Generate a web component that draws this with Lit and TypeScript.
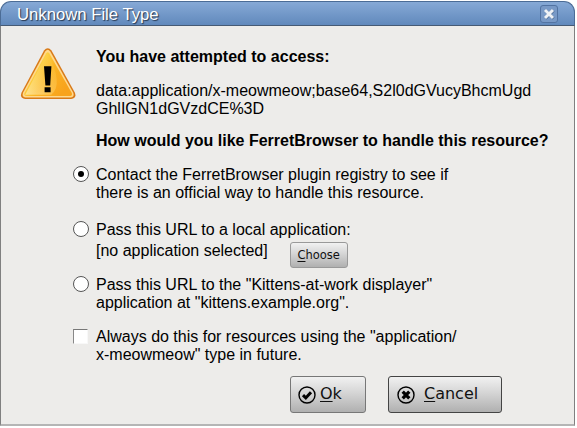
import { LitElement, html, css, svg } from "lit";
import { customElement } from "lit/decorators.js";

@customElement("warning-icon")
class WarningIcon extends LitElement {
  static styles = css`:host { display: block; width: 58px; height: 54px; } svg { display: block; }`;
  render() {
    return html`<svg width="58" height="54" viewBox="0.8 0 58 54">
      <defs>
        <linearGradient id="fill" x1="0" y1="0" x2="1" y2="0.6">
          <stop offset="0" stop-color="#fff09a"></stop>
          <stop offset="0.3" stop-color="#fdd74a"></stop>
          <stop offset="0.6" stop-color="#fbb424"></stop>
          <stop offset="1" stop-color="#f8a31c"></stop>
        </linearGradient>
        <linearGradient id="glow" x1="0" y1="1" x2="0.8" y2="0">
          <stop offset="0" stop-color="#fffbd8"></stop>
          <stop offset="1" stop-color="#fdd455" stop-opacity="0.2"></stop>
        </linearGradient>
      </defs>
      <path d="M24.8 2.6Q28.5 -2 32.3 2.6L55.6 44.4Q57.8 50.2 52 51H6Q0.2 50.2 2.4 44.4Z" fill="#d97a18"></path>
      <path d="M26 3.5Q28.5 0.2 31.1 3.5L54.1 44.8Q55.5 49 51.8 49.4H6.2Q2.4 49 3.8 44.8Z" fill="#ffd98c"></path>
      <path d="M27 5.2Q28.5 3.2 30 5.2L52.6 45Q53.4 47.5 51 48H7Q4.4 47.5 5.3 45Z" fill="url(#fill)"></path>
      <path d="M28 5L6 46.8H32Q45 36 28 5Z" fill="url(#glow)" opacity="0.55"></path>
      <path d="M24.8 18.2H32.2L31 37.6H26.2ZM25.4 39.2H31.4V44.2H25.4Z" fill="#000"></path>
    </svg>`;
  }
}

const check = svg`<path d="M5 9.2L7.8 11.9L13 6.2" fill="none" stroke="#000" stroke-width="3"></path>`;
const cross = svg`<path d="M5.7 5.7L12.3 12.3M12.3 5.7L5.7 12.3" fill="none" stroke="#000" stroke-width="3.3"></path>`;
const ring = (mark: unknown) => html`<svg class="ring" width="18" height="18" viewBox="0 0 18 18">
  <circle cx="9" cy="9" r="8" fill="none" stroke="#000" stroke-width="1.4"></circle>${mark}</svg>`;

@customElement("app-root")
class AppRoot extends LitElement {
  static styles = css`
    :host { display: block; width: 577px; height: 428px; background: #fff; overflow: hidden;
      font: 16px/18px "Liberation Sans", Arial, sans-serif; color: #000; }
    * { box-sizing: border-box; }
    .window { width: 575px; height: 426px; padding-top: 1px; display: flex; flex-direction: column; }
    .title { height: 25px; flex: none; display: flex; align-items: center; justify-content: space-between;
      padding: 1px 16px 0 16px; border: 1px solid #4b6c96; border-bottom-color: #465a74; border-radius: 11px 11px 0 0;
      background: linear-gradient(#86a9d6, #6189bc); color: #fff; font-size: 16.7px; text-shadow: 1px 1px 1px #24354c; }
    .name { padding-top: 2px; }
    .close { width: 18px; height: 18px; display: block; }
    .body { flex: 1; background: #edecea; border: 1px solid #808080; border-top: 0; border-bottom: 2px solid #b5b5b5;
      display: flex; padding: 22px 0 0 19px; }
    .content { display: flex; flex-direction: column; margin-left: -7px; white-space: nowrap; }
    .line { display: block; }
    .bold { font-weight: bold; }
    .indent { margin-left: 25px; }
    .uri { margin: 16px 0 14px 25px; }
    .option { display: flex; gap: 7px; margin-left: 2px; }
    .first { margin-top: 16px; }
    .second { margin-top: 19px; height: 39px; }
    .third { margin-top: 16px; }
    .always { margin-top: 16px; gap: 8px; }
    .radio { flex: none; width: 16px; height: 16px; border: 1px solid #555; border-radius: 50%; background: #fff;
      display: flex; align-items: center; justify-content: center; }
    .dot { width: 6px; height: 6px; border-radius: 50%; background: #000; }
    .box { flex: none; width: 15px; height: 15px; background: #fff; border: 1px solid #f8f8f8; border-top-color: #777;
      border-left-color: #888; margin-top: 1px; }
    .picker { display: flex; gap: 22px; padding-top: 3px; }
    button { font-family: "DejaVu Sans", sans-serif; color: #111; padding: 0; border: 1px solid #777;
      border-radius: 3px; background: linear-gradient(#f1f1f1, #d5d5d5 45%, #b0b0b0); display: flex; align-items: center; }
    .key { text-decoration: underline; text-decoration-thickness: 1px; text-underline-offset: 2px; }
    .choose { width: 58px; height: 26px; font-size: 11.5px; line-height: 14px; justify-content: center; border-color: #999; }
    .actions { display: flex; gap: 22px; margin: 12px 0 0 219px; }
    .actions button { height: 37px; font-size: 16px; line-height: 20px; }
    .ok { width: 76px; padding: 0 0 0 7px; gap: 4px; }
    .actions .cancel { width: 114px; padding: 0 0 0 8px; gap: 9px; border-color: #444; }
    .caption { padding-bottom: 1px; }
    .ring { flex: none; margin-top: 1px; }
  `;
  render() {
    return html`<div class="window">
      <div class="title"><span class="name">Unknown File Type</span>
        <svg class="close" viewBox="0 0 18 18">
          <rect x="0.5" y="0.5" width="17" height="17" rx="2.5" fill="#7899c6" stroke="#5273a2"></rect>
          <path d="M5.5 5.5L13.5 13.5M13.5 5.5L5.5 13.5" stroke="#4a6a94" stroke-width="3"></path>
          <path d="M5 5L13 13M13 5L5 13" stroke="#eef1f5" stroke-width="3"></path>
        </svg></div>
      <div class="body">
        <warning-icon></warning-icon>
        <div class="content">
          <span class="line bold indent">You have attempted to access:</span>
          <div class="uri"><span class="line">data:application/x-meowmeow;base64,S2l0dGVucyBhcmUgd</span><span class="line">GhlIGN1dGVzdCE%3D</span></div>
          <span class="line bold indent">How would you like FerretBrowser to handle this resource?</span>
          <div class="option first"><span class="radio"><span class="dot"></span></span>
            <div><span class="line">Contact the FerretBrowser plugin registry to see if</span><span class="line">there is an official way to handle this resource.</span></div></div>
          <div class="option second"><span class="radio"></span>
            <div><span class="line">Pass this URL to a local application:</span>
              <div class="picker"><span>[no application selected]</span><button class="choose"><span><span class="key">C</span>hoose</span></button></div></div></div>
          <div class="option third"><span class="radio"></span>
            <div><span class="line">Pass this URL to the "Kittens-at-work displayer"</span><span class="line">application at "kittens.example.org".</span></div></div>
          <div class="option always"><span class="box"></span>
            <div><span class="line">Always do this for resources using the "application/</span><span class="line">x-meowmeow" type in future.</span></div></div>
          <div class="actions">
            <button class="ok">${ring(check)}<span class="caption"><span class="key">O</span>k</span></button>
            <button class="cancel">${ring(cross)}<span class="caption"><span class="key">C</span>ancel</span></button>
          </div>
        </div>
      </div>
    </div>`;
  }
}
